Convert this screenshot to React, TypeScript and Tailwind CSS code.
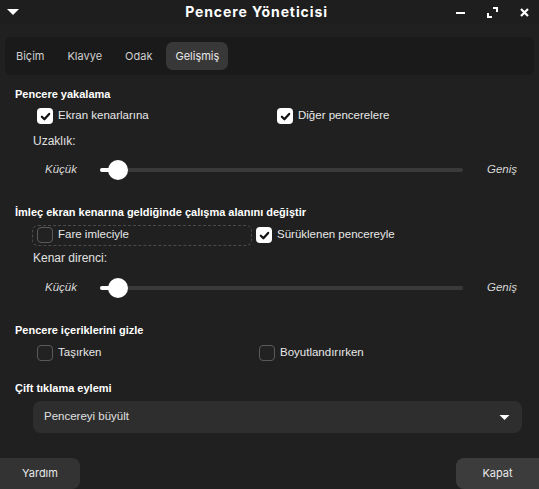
import React from 'react';

const font = { fontFamily: '"Liberation Sans", Arial, sans-serif' };
const inter = { fontFamily: 'Inter, "Liberation Sans", sans-serif' };

const Check = ({ checked, label }: { checked: boolean; label: string }) => (
  <div className="flex items-center gap-[5px]">
    {checked ? (
      <span className="w-4 h-4 rounded-[4px] bg-white flex items-center justify-center">
        <svg width="11" height="11" viewBox="0 0 12 12">
          <path d="M2 6.2 L4.8 9 L10 3.2" fill="none" stroke="#111" strokeWidth="2.4" strokeLinecap="round" strokeLinejoin="round" />
        </svg>
      </span>
    ) : (
      <span className="w-4 h-4 rounded-[4px] border border-[#5a5a5a] bg-[#222]" />
    )}
    <span className="text-[11.5px] leading-none text-[#e8e8e8]">{label}</span>
  </div>
);

const Slider = ({ pct }: { pct: number }) => (
  <div className="flex items-center h-5 pl-[45px]">
    <span className="w-[55px] text-[11.5px] leading-none italic text-[#d8d8d8]">Küçük</span>
    <div className="relative w-[363px] h-[4px] rounded-full bg-[#3a3a3a]">
      <div className="absolute left-0 top-0 h-[4px] rounded-full bg-white" style={{ width: `${pct}%` }} />
      <div
        className="absolute top-1/2 -translate-y-1/2 -translate-x-1/2 w-5 h-5 rounded-full bg-white"
        style={{ left: `${pct}%` }}
      />
    </div>
    <span className="ml-[24px] text-[11.5px] leading-none italic text-[#d8d8d8]">Geniş</span>
  </div>
);

const Heading = ({ children, className = '' }: { children: React.ReactNode; className?: string }) => (
  <div className={`h-4 flex items-center pl-[15px] text-[11px] leading-none font-bold text-white ${className}`}>{children}</div>
);

export default function App() {
  const tabs = ['Biçim', 'Klavye', 'Odak', 'Gelişmiş'];

  return (
    <div className="w-[539px] h-[489px] bg-[#202020] flex flex-col overflow-hidden" style={font}>
      {/* title bar */}
      <div className="h-[24px] flex items-center px-[5px] bg-[#1e1e1e]">
        <svg width="14" height="10" viewBox="0 0 14 10" className="ml-[1px]">
          <path d="M1 2 L13 2 L7 8 Z" fill="#fff" />
        </svg>
        <div className="flex-1 text-center text-[14px] tracking-[0.9px] leading-none font-bold text-white pl-[38px]" style={inter}>
          Pencere Yöneticisi
        </div>
        <div className="flex items-center gap-[21px] pr-[4px]">
          <svg width="11" height="11" viewBox="0 0 11 11">
            <rect x="1" y="5" width="9" height="2" fill="#fff" />
          </svg>
          <svg width="11" height="11" viewBox="0 0 11 11">
            <path d="M6 1 H10 V5 M1 6 V10 H5" fill="none" stroke="#fff" strokeWidth="2" />
          </svg>
          <svg width="11" height="11" viewBox="0 0 11 11">
            <path d="M2 2 L9 9 M9 2 L2 9" stroke="#fff" strokeWidth="2.2" />
          </svg>
        </div>
      </div>

      {/* tabs */}
      <div className="mt-[13px] mx-[5px] h-[38px] rounded-[6px] bg-[#1a1a1a] flex items-center px-[2px] gap-[5px]">
        {tabs.map((t) => (
          <div
            key={t}
            className={`h-[28px] px-[9px] flex items-center rounded-[7px] text-[11px] ${
              t === 'Gelişmiş' ? 'bg-[#383838] text-[#e8e8e8]' : 'text-[#cfcfcf]'
            }`}
            style={inter}
          >
            {t}
          </div>
        ))}
      </div>

      {/* content */}
      <div className="flex flex-col">
        <Heading className="mt-[11px]">Pencere yakalama</Heading>
        <div className="flex h-5 items-center mt-[4px] pl-[37px]">
          <div className="w-[240px]"><Check checked label="Ekran kenarlarına" /></div>
          <Check checked label="Diğer pencerelere" />
        </div>
        <div className="h-4 flex items-center pl-[33px] mt-[7px] text-[12px] leading-none text-[#e0e0e0]">Uzaklık:</div>
        <div className="mt-[11px]"><Slider pct={5} /></div>

        <Heading className="mt-[24px]">İmleç ekran kenarına geldiğinde çalışma alanını değiştir</Heading>
        <div className="flex items-center h-5 mt-[5px] pl-[32px]">
          <div className="w-[220px] h-[21px] pl-[4px] flex items-center rounded-[6px] border border-dashed border-[#4a4a4a]">
            <Check checked={false} label="Fare imleciyle" />
          </div>
          <div className="ml-[4px]"><Check checked label="Sürüklenen pencereyle" /></div>
        </div>
        <div className="h-4 flex items-center pl-[33px] mt-[5px] text-[12px] leading-none text-[#e0e0e0]">Kenar direnci:</div>
        <div className="mt-[12px]"><Slider pct={5} /></div>

        <Heading className="mt-[24px]">Pencere içeriklerini gizle</Heading>
        <div className="flex h-5 items-center mt-[5px] pl-[37px]">
          <div className="w-[222px]"><Check checked={false} label="Taşırken" /></div>
          <Check checked={false} label="Boyutlandırırken" />
        </div>

        <Heading className="mt-[17px]">Çift tıklama eylemi</Heading>
        <div className="mt-[5px] ml-[33px] w-[489px] h-[32px] rounded-[8px] bg-[#2e2e2e] flex items-center pl-[11px] pr-[12px]">
          <span className="flex-1 text-[11.5px] leading-none text-[#e0e0e0]">Pencereyi büyült</span>
          <svg width="11" height="7" viewBox="0 0 11 7">
            <path d="M0.5 1 L10.5 1 L5.5 6 Z" fill="#fff" />
          </svg>
        </div>
      </div>

      {/* footer */}
      <div className="mt-auto flex justify-between">
        <div className="w-[80px] h-[31px] rounded-r-[8px] bg-[#333] flex items-center justify-center text-[11px] text-[#e8e8e8]" style={inter}>
          Yardım
        </div>
        <div className="w-[83px] h-[31px] rounded-l-[8px] bg-[#3c3c3c] flex items-center justify-center text-[11px] text-[#e8e8e8]" style={inter}>
          Kapat
        </div>
      </div>
    </div>
  );
}
